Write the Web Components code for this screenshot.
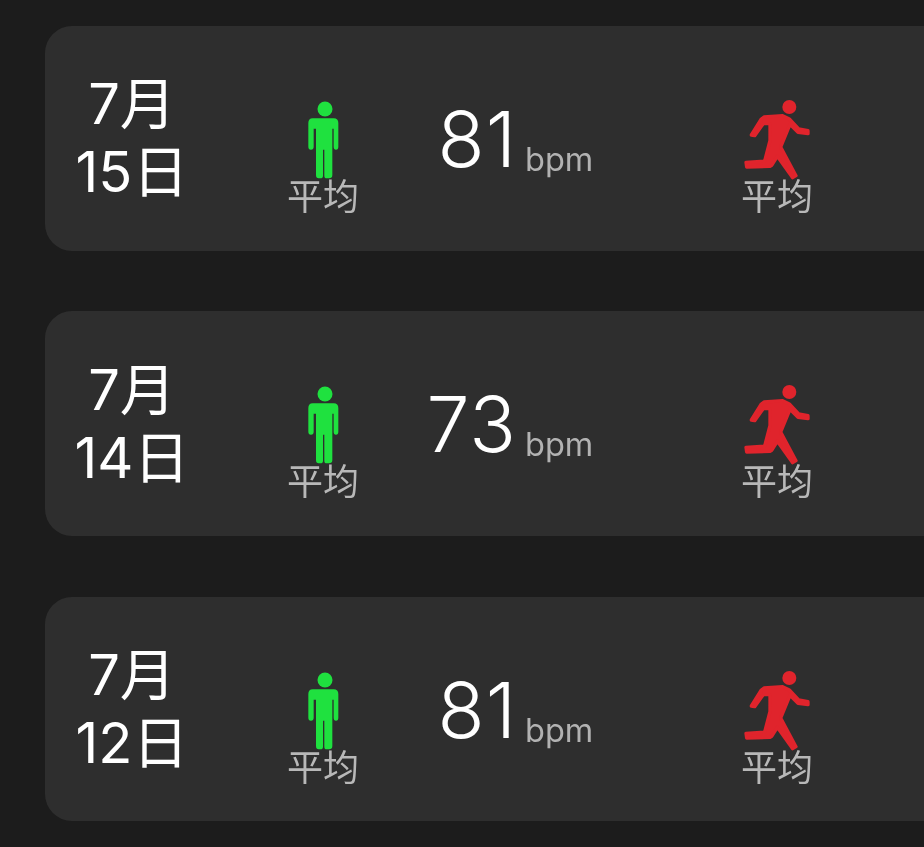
<!DOCTYPE html>
<html lang="zh">
<head>
<meta charset="utf-8">
<title>心率</title>
<style>
  html, body { margin: 0; height: 100%; background: #1c1c1c; overflow: hidden; }
</style>
</head>
<body>
<hr-list>
  <hr-day month="7月" day="15日" value="81"></hr-day>
  <hr-day month="7月" day="14日" value="73"></hr-day>
  <hr-day month="7月" day="12日" value="81"></hr-day>
</hr-list>
<script>
const ICONS = {
  rest: `
    <svg width="32" height="78" viewBox="80 30 96 234">
      <circle cx="134" cy="54" r="22.5" fill="#1fe13f"/>
      <path fill="#1fe13f" d="M97 82H160Q174 82 174 96V167Q174 176 167 176T160 167V113H156V252Q156 262 146 262H139Q132 262 132 254V176H128V254Q128 262 120 262H115Q107 262 107 252V113H100V167Q100 176 92 176T84 167V96Q84 82 97 82Z"/>
    </svg>`,
  run: `
    <svg width="74" height="86" viewBox="0 0 222 258">
      <circle cx="148" cy="30" r="21" fill="#e0242c"/>
      <path fill="#e0242c" stroke="#e0242c" stroke-width="10" stroke-linejoin="round"
        d="M34 114L64 66L72 60L128 56L148 66L176 96L204 101L204 110L174 106L150 82L122 150L168 236L158 242L112 178L96 204L90 208L20 210L18 196L74 192L90 130L90 80L70 80L44 116Z"/>
    </svg>`
};

class HrList extends HTMLElement {
  constructor() {
    super();
    this.attachShadow({ mode: "open" });
    this.shadowRoot.innerHTML = `
      <style>
        :host {
          display: flex;
          flex-direction: column;
          gap: 60.75px;
          padding: 26px 0 0 45px;
          width: 1100px;
        }
      </style>
      <slot></slot>
    `;
  }
}

class HrStat extends HTMLElement {
  constructor() {
    super();
    this.attachShadow({ mode: "open" });
    this.shadowRoot.innerHTML = `
      <style>
        :host {
          display: flex;
          flex-direction: column;
          align-items: center;
          width: 100px;
        }
        .icon { height: 78px; display: flex; align-items: flex-end; }
        .icon svg { display: block; flex: none; }
        :host([kind="run"]) .icon svg { margin-bottom: -4px; }
        :host([kind="rest"]) .icon svg { margin-left: -1px; }
        .label {
          font: 400 36px/38px "Noto Sans CJK SC", sans-serif;
          color: #b8b8b8;
          margin-top: -4px;
          will-change: transform;
        }
      </style>
      <div class="icon"></div>
      <div class="label">平均</div>
    `;
  }

  connectedCallback() {
    this.shadowRoot.querySelector(".icon").innerHTML = ICONS[this.getAttribute("kind")];
  }
}

class HrDay extends HTMLElement {
  constructor() {
    super();
    this.attachShadow({ mode: "open" });
    this.shadowRoot.innerHTML = `
      <style>
        :host {
          display: flex;
          align-items: center;
          height: 224.5px;
          border-radius: 27px;
          background: #2e2e2e;
          color: #fff;
        }
        .date {
          width: 174px;
          text-align: center;
          font: 400 56px/68px Inter, "Noto Sans CJK SC", sans-serif;
          margin-top: 0;
          will-change: transform;
        }
        .date div { white-space: nowrap; }
        hr-stat { align-self: flex-start; margin-top: 75px; }
        .rest { margin-left: 54px; }
        .reading {
          display: flex;
          align-items: flex-end;
          gap: 8px;
          width: 354px;
          align-self: flex-start;
          margin-top: 67px;
        }
        .value {
          width: 144px;
          text-align: right;
          font: 300 77px/92px Inter, sans-serif;
          letter-spacing: 1px;
          will-change: transform;
        }
        .unit {
          font: 400 32.5px/40px Inter, sans-serif;
          color: #b2b2b2;
          margin-bottom: 5px;
          will-change: transform;
        }
      </style>
      <div class="date">
        <div class="month"></div>
        <div class="day"></div>
      </div>
      <hr-stat class="rest" kind="rest"></hr-stat>
      <div class="reading">
        <span class="value"></span>
        <span class="unit">bpm</span>
      </div>
      <hr-stat kind="run"></hr-stat>
    `;
  }

  connectedCallback() {
    this.shadowRoot.querySelector(".month").textContent = this.getAttribute("month");
    this.shadowRoot.querySelector(".day").textContent = this.getAttribute("day");
    this.shadowRoot.querySelector(".value").textContent = this.getAttribute("value");
  }
}

customElements.define("hr-list", HrList);
customElements.define("hr-stat", HrStat);
customElements.define("hr-day", HrDay);
</script>
</body>
</html>
